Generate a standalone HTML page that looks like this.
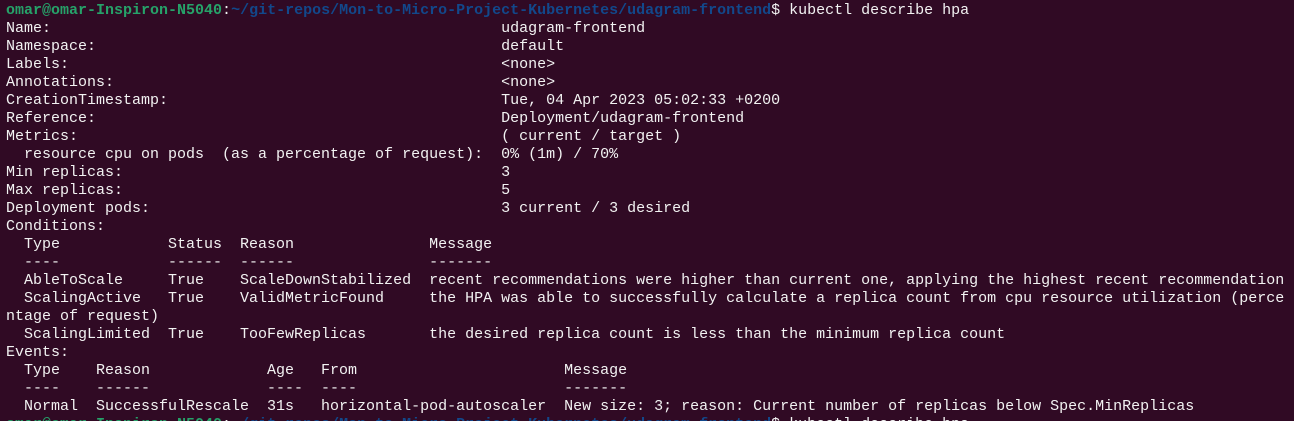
<!DOCTYPE html>
<html><head><meta charset="utf-8"><style>
html,body{margin:0;padding:0;background:#300a24;width:1294px;height:421px;overflow:hidden}
pre{margin:0;padding:2px 0 0 6px;font-family:"Liberation Mono",monospace;font-size:15px;line-height:18px;color:#f2f2f2;white-space:pre}
.g{color:#26a269;font-weight:bold}.b{color:#12488b;font-weight:bold}
</style></head><body><pre><span class="g">omar@omar-Inspiron-N5040</span>:<span class="b">~/git-repos/Mon-to-Micro-Project-Kubernetes/udagram-frontend</span>$ kubectl describe hpa
Name:                                                  udagram-frontend
Namespace:                                             default
Labels:                                                &lt;none&gt;
Annotations:                                           &lt;none&gt;
CreationTimestamp:                                     Tue, 04 Apr 2023 05:02:33 +0200
Reference:                                             Deployment/udagram-frontend
Metrics:                                               ( current / target )
  resource cpu on pods  (as a percentage of request):  0% (1m) / 70%
Min replicas:                                          3
Max replicas:                                          5
Deployment pods:                                       3 current / 3 desired
Conditions:
  Type            Status  Reason               Message
  ----            ------  ------               -------
  AbleToScale     True    ScaleDownStabilized  recent recommendations were higher than current one, applying the highest recent recommendation
  ScalingActive   True    ValidMetricFound     the HPA was able to successfully calculate a replica count from cpu resource utilization (perce
ntage of request)
  ScalingLimited  True    TooFewReplicas       the desired replica count is less than the minimum replica count
Events:
  Type    Reason             Age   From                       Message
  ----    ------             ----  ----                       -------
  Normal  SuccessfulRescale  31s   horizontal-pod-autoscaler  New size: 3; reason: Current number of replicas below Spec.MinReplicas
<span class="g">omar@omar-Inspiron-N5040</span>:<span class="b">~/git-repos/Mon-to-Micro-Project-Kubernetes/udagram-frontend</span>$ kubectl describe hpa</pre></body></html>
